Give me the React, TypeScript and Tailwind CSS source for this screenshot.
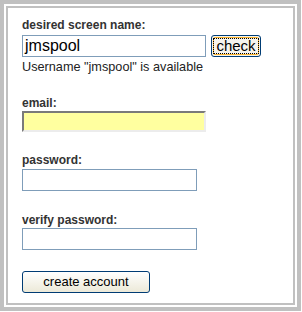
import React from "react";

export default function App() {
  const font = { fontFamily: '"Liberation Sans", Arial, sans-serif' };
  return (
    <div className="bg-white w-[302px] h-[312px]" style={font}>
      <div className="w-[301px] h-[311px] border-4 border-[#c0c0c0] p-[2px] bg-white">
        <div className="w-full h-full border-2 border-[#c0c0c0] bg-white pl-[14px] pt-[9px] text-[12.7px] text-[#333]">
          <div className="font-bold text-[12px] leading-[16px] h-[16px]">desired screen name:</div>
          <div className="flex items-center mt-[2px] h-[22px]">
            <div className="w-[184px] h-[22px] border border-[#7f9db9] bg-white flex items-center pl-[2px] text-[16px] text-black leading-none">
              jmspool
            </div>
            <div className="ml-[5px] w-[50px] h-[22px] rounded-[3px] border border-[#003c74] bg-[#f5f4ee] p-[1px]">
              <div className="w-full h-full rounded-[2px] border border-[#f8b330] flex items-center justify-center">
                <div className="border border-dotted border-black px-[2px] leading-[14px] text-[15px] text-black">check</div>
              </div>
            </div>
          </div>
          <div className="leading-[16px] mt-[2px] text-[#222]">Username "jmspool" is available</div>

          <div className="font-bold text-[12px] leading-[16px] mt-[20px]">email:</div>
          <div className="mt-[0px] w-[184px] h-[21px] bg-[#ffff9f] border-2 border-t-[#7a7a7a] border-l-[#7a7a7a] border-r-[#ececec] border-b-[#ececec]" />

          <div className="font-bold text-[12px] leading-[16px] mt-[20px]">password:</div>
          <div className="mt-[1px] w-[175px] h-[22px] border border-[#7f9db9] bg-white" />

          <div className="font-bold text-[12px] leading-[16px] mt-[21px]">verify password:</div>
          <div className="mt-[0px] w-[175px] h-[22px] border border-[#7f9db9] bg-white" />

          <div className="mt-[21px] w-[128px] h-[22px] rounded-[3px] border border-[#003c74] bg-gradient-to-b from-white to-[#ece9d8] flex items-center justify-center text-[13px] text-black">
            create account
          </div>
        </div>
      </div>
    </div>
  );
}
